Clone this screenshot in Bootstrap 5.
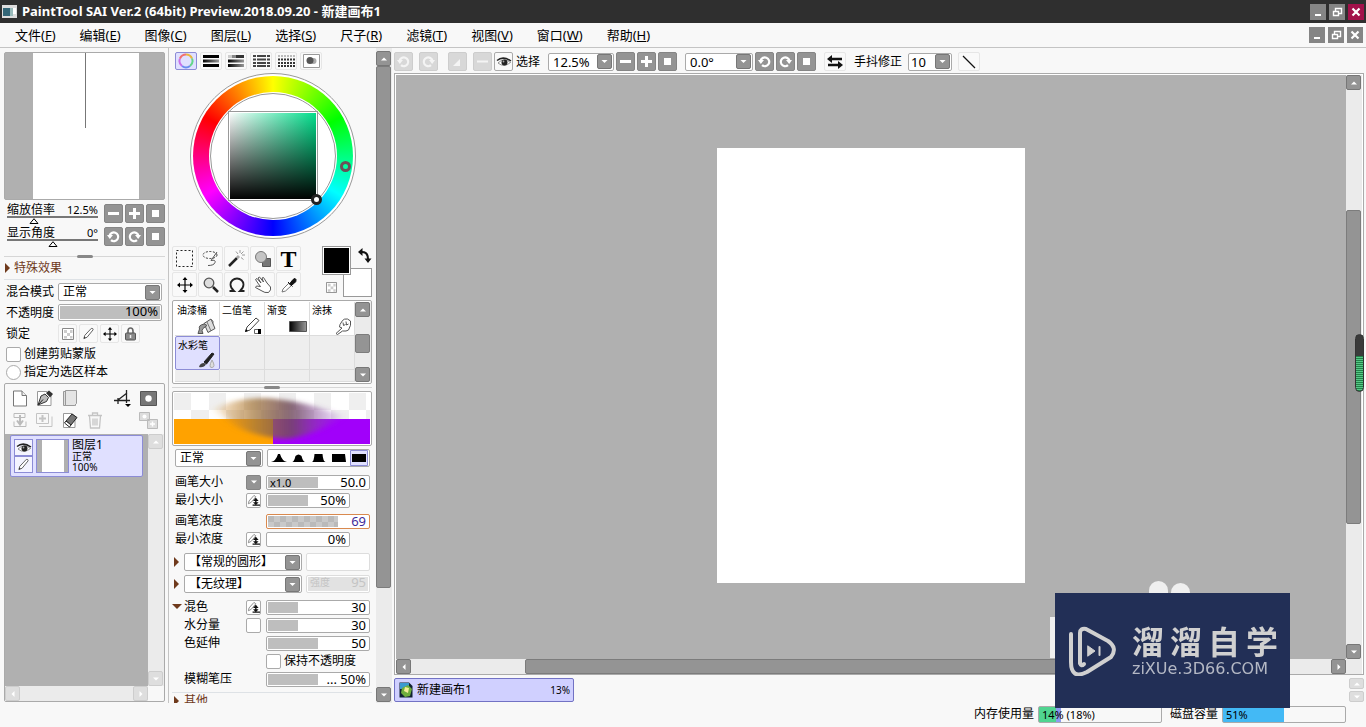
<!DOCTYPE html>
<html lang="zh-CN">
<head>
<meta charset="utf-8">
<meta name="viewport" content="width=device-width, initial-scale=1">
<title>PaintTool SAI Ver.2</title>
<link href="https://cdn.jsdelivr.net/npm/bootstrap@5.3.0/dist/css/bootstrap.min.css" rel="stylesheet">
<style>
:root{--face:#f8f8f8;--line:#c4c4c4;--edge:#aaa;--canvas:#b0b0b0;--btn:#949494;--brown:#6f3a1c}
body{font-family:"Noto Sans","Noto Sans CJK SC",sans-serif;font-size:12px;line-height:16px;color:#000;background:var(--face);overflow:hidden}
button,input,select{font:inherit;color:inherit}
button{padding:0;border:0;background:none}
svg{display:block}
.titlebar{height:23px;background:#2f2f2f;color:#fff;font-weight:700;font-size:13px;padding:0 2px;gap:5px;flex:none}
.caption{line-height:18px;padding-bottom:2px}
.menubar{height:25px;border-bottom:1px solid var(--line);padding:0 3px;flex:none;font-size:13px}
.menubar a{color:#000;text-decoration:none;padding:0 12px}
.wins{gap:3px}
.winbtn{width:16px;height:16px;background:#858585;display:grid;place-items:center}
.winbtn.shut{background:#a3114a}
.side{width:168px;padding:4px 3px 1px 4px}
.mid{width:225px;border-left:1px solid var(--line)}
.midbody{width:207px;padding:4px 0 0 3px;overflow:hidden}
.framed{border:1px solid var(--edge);border-radius:2px;background:#fff}
.navi{height:148px;background:var(--canvas);display:flex;justify-content:center;padding-left:2px}
.navi div{width:106px;background:#fff;display:flex;justify-content:center}
.navi i{width:1px;height:75px;background:#777}
.sq{width:19px;height:19px;background:var(--btn);border:1px solid #858585;border-radius:2px;display:grid;place-items:center;color:#fff;flex:none}
.sq.off{background:#d8d8d8;border-color:#cdcdcd;color:#f4f4f4}
.g2{gap:2px}.g3{gap:3px}
.tick{width:91px;height:19px;margin-left:3px}
.tick .top{height:12px;line-height:12px}
.tick span{font-size:11px}
.tick input{appearance:none;display:block;width:91px;height:8px;margin:0;background:linear-gradient(#777,#777) 0 0/100% 2px no-repeat}
.tick input::-webkit-slider-thumb{appearance:none;width:10px;height:6px;margin-top:2px;background:url("data:image/svg+xml,%3Csvg xmlns='http://www.w3.org/2000/svg' viewBox='0 0 10 6'%3E%3Cpath d='M5 .7L9 5.5H1z' fill='%23fff' stroke='%23000'/%3E%3C/svg%3E")}
.split{height:8px;display:flex;align-items:center;justify-content:center;background:linear-gradient(#d6d6d6,#d6d6d6) 0 50%/100% 1px no-repeat}
.split.midw{height:7px}
.split i{width:16px;height:3px;border-radius:2px;background:#888}
.head{color:var(--brown)}
.head.fx{gap:2px;padding-bottom:3px}
.field{padding-left:2px}
.combo{appearance:none;border:1px solid var(--edge);border-radius:2px;height:18px;line-height:16px;padding:0 18px 0 4px;background:#fff url("data:image/svg+xml,%3Csvg xmlns='http://www.w3.org/2000/svg' width='15' height='15'%3E%3Crect x='.5' y='.5' width='14' height='14' rx='1.5' fill='%23949494' stroke='%23777'/%3E%3Cpath d='M4.500 6h6l-3 3z' fill='%23fff'/%3E%3C/svg%3E") right 1px center no-repeat}
.big{font-size:13px}
.gauge{position:relative;height:15px;border:1px solid var(--edge);border-radius:2px;background:#fff;padding:1px}
.gauge input{appearance:none;display:block;width:100%;height:100%;margin:0;background:linear-gradient(#bebebe,#bebebe) 0 0/var(--v) 100% no-repeat}
.gauge input::-webkit-slider-thumb{appearance:none;width:1px;height:1px}
.gauge output,.gauge small{position:absolute;right:3px;top:0;line-height:13px;font-size:13px;pointer-events:none}
.gauge small{left:3px;right:auto;font-size:11px}
.gauge.hot{border-color:#d9894e}
.gauge.hot input{background:linear-gradient(90deg,transparent 70%,#fff 70%),repeating-conic-gradient(#c9c9c9 0 25%,#bababa 0 50%) 0 0/12px 12px}
.gauge.hot output{color:#3f2b9a}
.gauge.dim{border-color:#ddd;color:#c4c4c4}
.gauge.dim input{background:#e2e2e2}
.tool{border:1px solid #e6e6e6;border-radius:2px;display:grid;place-items:center;flex:none;background:#f9f9f9}
.lock .tool{width:19px;height:19px}
.lock span{margin-right:26px}
.tickbox{appearance:none;width:15px;height:15px;border:1px solid var(--edge);border-radius:2px;background:#fff;margin:0;flex:none}
.tickbox[type=radio]{border-radius:50%}
.clip{padding-left:2px}
.layers{flex:1;min-height:0;display:flex;flex-direction:column;background:var(--face);overflow:hidden;margin-top:3px}
.ltools{display:grid;grid-template-columns:repeat(3,25px) 1fr 29px 23px;height:50px;padding:3px 4px 3px 2px;flex:none}
.ltools button{display:grid;place-items:center}
.llist{background:var(--canvas);flex:1;padding:1px 5px}
.layer{width:133px;height:42px;border:1px solid #8c8cd6;border-radius:2px;background:#e0e0ff;display:flex;padding:3px}
.mini{width:19px;height:17px;border:1px solid #8c8cd6;background:#f4f4ff;display:grid;place-items:center}
.thumbn{width:33px;height:34px;background:var(--canvas);border:1px solid #8c8cd6;display:flex;justify-content:center;margin:0 3px}
.thumbn i{width:22px;background:#fff}
.lname{font-size:12px;line-height:12px}
.tiny{font-size:10px;line-height:11px}
.vbar{width:16px;display:flex;flex-direction:column;background:#ebebeb;flex:none}
.hbar{height:15px;display:flex;background:#ebebeb;flex:none}
.sb{width:15px;height:15px;background:var(--btn);border:1px solid #777;border-radius:2px;color:#fff;display:grid;place-items:center;flex:none}
.sb.off{background:#dedede;border-color:#cdcdcd}
.sb.half{height:11px}
.grab{background:#949494;border:1px solid #7c7c7c;border-radius:2px;min-width:14px}
.vbar .grab{width:15px}
.ptab{width:22px;height:18px;margin-right:3px}
.ptab.on{border-color:#8c8cd6;background:#e0e0ff}
.wheel{width:166px;height:166px;margin:3px 0 7px 18px;display:grid;place-items:center;position:relative;border-radius:50%;border:1px solid #999;background:#fff}
.hue{grid-area:1/1;width:160px;height:160px;border-radius:50%;background:conic-gradient(#ff0,#0f0 60deg,#0ff 120deg,#00f 180deg,#f0f 240deg,#f00 300deg,#ff0)}
.hole{grid-area:1/1;width:128px;height:128px;border-radius:50%;background:#fff;display:grid;place-items:center}
.hole div{width:126px;height:126px;border-radius:50%;border:1px solid #999}
.sv{grid-area:1/1;width:90px;height:90px;border:1px solid #999;outline:1px solid #fff;outline-offset:-2px;background:linear-gradient(to top,#000,transparent),linear-gradient(to right,#fff,#00e08c)}
.pin{position:absolute;width:11px;height:11px;border-radius:50%;border:3px solid #6b4f58}
.tools{display:grid;grid-template-columns:repeat(5,25px);grid-auto-rows:25px;gap:1px}
.glyph{font:700 24px/22px "Liberation Serif","Noto Sans CJK SC",serif}
.swatches{position:relative;width:50px;height:51px}
.swatches .fore,.swatches .back{position:absolute;width:29px;height:29px;border:1px solid #999;background:#000}
.swatches .fore{left:0;top:0;box-shadow:inset 0 0 0 1px #fff}
.swatches .back{right:0;bottom:0;background:#fff}
.midw{width:200px}
.brushes{height:84px;margin-top:3px;display:flex;padding:1px}
.bgrid{flex:1;display:grid;grid-template-columns:repeat(4,45px);grid-template-rows:34px 34px 1fr;padding-left:1px}
.bgrid>*{border-right:1px solid #dcdcdc;border-bottom:1px solid #dcdcdc;background:#eee;text-align:left;overflow:hidden}
.bgrid>button{background:#fff;font-size:10px;line-height:12px;padding:2px 0 0 2px;display:flex;flex-direction:column;justify-content:space-between}
.bgrid>button svg{align-self:flex-end;margin-right:2px}
.bgrid>button.on{border:1px solid #8c8cd6;background:#e0e0ff;border-radius:2px}
.preview{height:55px;padding:1px}
.row2{margin-left:3px}
.opts{display:grid;grid-template-columns:71px 20px 104px;height:15px;align-items:center;padding-left:3px}
.opts>.gauge{width:104px}
.opts>.gauge.short{width:84px}
.pen{width:15px;height:15px;border:1px solid #aaa;border-radius:2px;background:#fff;display:grid;place-items:center}
.pen.fill{background:var(--btn);border-color:#858585}
.opts.in>:first-child{padding-left:9px}
.half2{width:64px;height:18px;margin-left:4px;border-color:#ddd}
.half2 small{font-size:10px}
.wide{width:118px}
.mt2p{margin-top:2px}.mt3p{margin-top:3px}.mt4p{margin-top:4px}.mt6p{margin-top:6px}.mt7p{margin-top:7px}
.tw{width:12px;flex:none}
.fold{position:absolute;left:-3px;top:5px}
.work{padding:4px 2px 0 1px;min-width:0}
.bar1{height:19px;gap:2px}
.gap-end{margin-right:6px}
.stage{border:1px solid var(--edge);margin-top:2px;padding:1px 1px 0;min-height:0;background:#fff}
.desk{background:var(--canvas);display:flex;align-items:center;justify-content:center;min-width:0;padding-bottom:3px}
.paper{height:75%;aspect-ratio:310/438;background:#fff}
.tabs{height:28px;padding-top:3px}
.doc{width:180px;height:24px;border:1px solid #7272c4;background:#d0d0ff;border-radius:2px;padding:0 3px 0 4px}
.status{height:24px;padding:2px 20px 4px 0;flex:none}
.load{width:124px;height:17px;border:1px solid #aaa;border-radius:2px;margin:0 8px 0 4px;padding:0 3px;line-height:15px;font-size:11px}
.load.mem{background:linear-gradient(90deg,#50d490 14%,#8c9cf0 14% 18%,transparent 18%)}
.load.disk{background:linear-gradient(90deg,#43b9f5 50%,transparent 50%);margin-right:0}
.brand{position:fixed;right:76px;bottom:19px;width:235px;height:115px;background:#222f56;color:#d0d0d0;padding:0 12px}
.brand .name{font-size:32px;font-weight:700;line-height:36px;width:146px}
.brand .url{font-family:"DejaVu Sans",sans-serif;font-size:16px;line-height:18px;color:#b4b8c4}
.ear{position:absolute;width:19px;height:12px;top:-12px;left:94px;border-radius:10px 10px 0 0;background:#efefef}
.ear.two{left:116px;height:10px;top:-10px}
.slab{position:absolute;left:-5px;top:24px;width:5px;height:41px;background:#efefef}
.vol{position:fixed;right:2px;top:334px;width:9px;height:58px;border:1px solid #333;border-radius:5px;background:linear-gradient(#3a3a3a 21px,transparent 21px),repeating-linear-gradient(#56c887 0 1px,#238048 1px 2px)}
</style>
</head>
<body class="vh-100 d-flex flex-column">
<svg width="0" height="0" class="position-absolute" aria-hidden="true">
<symbol id="minus" viewBox="0 0 13 13"><path d="M1 6.500h11" stroke="currentColor" stroke-width="3"/></symbol>
<symbol id="plus" viewBox="0 0 13 13"><path d="M1 6.500h11M6.500 1v11" stroke="currentColor" stroke-width="3"/></symbol>
<symbol id="stop" viewBox="0 0 13 13"><path d="M3 3h7v7H3z" fill="currentColor"/></symbol>
<symbol id="ccw" viewBox="0 0 13 13"><path d="M4 10.200A4.400 4.400 0 1 0 2.500 6" fill="none" stroke="currentColor" stroke-width="2.200"/><path d="M0 5h6L2.800 9z" fill="currentColor"/></symbol>
<symbol id="cw" viewBox="0 0 13 13"><path d="M9 10.200A4.400 4.400 0 1 1 10.500 6" fill="none" stroke="currentColor" stroke-width="2.200"/><path d="M13 5H7l3.200 4z" fill="currentColor"/></symbol>
<symbol id="up" viewBox="0 0 8 8"><path d="M1 5.500h6L4 2.500z" fill="#fff"/></symbol>
<symbol id="down" viewBox="0 0 8 8"><path d="M1 2.500h6L4 5.500z" fill="#fff"/></symbol>
<symbol id="lt" viewBox="0 0 8 8"><path d="M5.500 1v6L2.500 4z" fill="#fff"/></symbol>
<symbol id="rt" viewBox="0 0 8 8"><path d="M2.500 1v6L5.500 4z" fill="#fff"/></symbol>
<symbol id="wmin" viewBox="0 0 16 16"><path d="M5 11h6" stroke="#fff" stroke-width="2"/></symbol>
<symbol id="wres" viewBox="0 0 16 16"><path d="M6.500 8V4.500h6v5H10M4.500 7.500h5v4h-5z" fill="none" stroke="#fff" stroke-width="1.400"/></symbol>
<symbol id="wx" viewBox="0 0 16 16"><path d="M4.500 4.500l7 7m0-7l-7 7" stroke="#fff" stroke-width="2.200"/></symbol>
<symbol id="eye" viewBox="0 0 16 12"><path d="M1 4.500Q7-.5 15 5" fill="none" stroke="#222" stroke-width="1.500"/><path d="M2 7Q8 1 14.500 6.500 8 12 2 7z" fill="#fff" stroke="#666" stroke-width=".7"/><circle cx="8.500" cy="6.500" r="3" fill="#222"/><circle cx="7.500" cy="5.500" r=".9" fill="#aaa"/></symbol>
<symbol id="pencil" viewBox="0 0 14 14"><path d="M2 12.500l1-3.500L10 1.500q2-.5 2 1.500L5.500 11z" fill="#fff" stroke="#555"/><path d="M2 12.500l.7-2 1.300 1z" fill="#222"/></symbol>
<symbol id="penup" viewBox="0 0 14 14"><path d="M1.500 10.500l.7-3L7.500 1.500l2 1.500-5 6z" fill="#fff" stroke="#888"/><path d="M9.500 5v5M6 12h8" fill="none" stroke="#111" stroke-width="1.500"/><path d="M9.500 4l3 3.500h-6zM9.500 12l3-3h-6z" fill="#111"/></symbol>
<symbol id="move" viewBox="0 0 16 16"><path d="M8 1.500v13M1.500 8h13" stroke="currentColor" stroke-width="1.200"/><path d="M8 0l2.500 3h-5zM8 16l2.500-3h-5zM0 8l3-2.500v5zM16 8l-3-2.500v5z" fill="currentColor"/></symbol>
<symbol id="chk" viewBox="0 0 12 12"><path d="M.5.5h11v11H.5z" fill="#fff" stroke="#888"/><path d="M2 2h3v3H2zM8 2h2.500v3H8zM5 5h3v3H5zM2 8h3v2.500H2zM8 8h2.500v2.500H8z" fill="#ccc"/></symbol>
<symbol id="tri" viewBox="0 0 8 10"><path d="M1 0l5 5-5 5z" fill="#6f3a1c"/></symbol>
<symbol id="sheet" viewBox="0 0 16 16"><path d="M1.500.5H10l4.500 4.500v10.500h-13z" fill="#fff" stroke="#777"/><path d="M10 .5V5h4.500" fill="#eee" stroke="#777"/></symbol>
</svg>

<header class="titlebar d-flex align-items-center">
 <svg width="15" height="13" viewBox="0 0 15 13"><path d="M0 0h15v13H0z" fill="#ddd"/><path d="M1 3h7v8H1z" fill="#367"/><path d="M8 3h3v8H8z" fill="#9bb"/><path d="M11 3h3v6h-3z" fill="#fff"/></svg>
 <span class="caption">PaintTool SAI Ver.2 (64bit) Preview.2018.09.20 - 新建画布1</span>
 <div class="ms-auto d-flex wins">
  <button class="winbtn" aria-label="最小化"><svg width="16" height="16"><use href="#wmin"/></svg></button>
  <button class="winbtn" aria-label="还原"><svg width="16" height="16"><use href="#wres"/></svg></button>
  <button class="winbtn shut" aria-label="关闭"><svg width="16" height="16"><use href="#wx"/></svg></button>
 </div>
</header>
<nav class="menubar d-flex align-items-center">
 <a href="#">文件(<u>F</u>)</a><a href="#">编辑(<u>E</u>)</a><a href="#">图像(<u>C</u>)</a><a href="#">图层(<u>L</u>)</a><a href="#">选择(<u>S</u>)</a><a href="#">尺子(<u>R</u>)</a><a href="#">滤镜(<u>T</u>)</a><a href="#">视图(<u>V</u>)</a><a href="#">窗口(<u>W</u>)</a><a href="#">帮助(<u>H</u>)</a>
 <div class="ms-auto d-flex wins">
  <button class="winbtn" aria-label="最小化画布"><svg width="16" height="16"><use href="#wmin"/></svg></button>
  <button class="winbtn" aria-label="还原画布"><svg width="16" height="16"><use href="#wres"/></svg></button>
  <button class="winbtn" aria-label="关闭画布"><svg width="16" height="16"><use href="#wx"/></svg></button>
 </div>
</nav>

<main class="d-flex flex-fill" style="min-height:0">
<!-- navigator and layers -->
<aside class="side d-flex flex-column flex-shrink-0">
 <div class="navi framed"><div><i></i></div></div>
 <div class="d-flex mt4p g2">
  <div class="tick me-auto"><div class="top d-flex justify-content-between"><label for="zoom">缩放倍率</label><span>12.5%</span></div><input id="zoom" type="range" value="27"></div>
  <button class="sq" aria-label="缩小"><svg width="13" height="13"><use href="#minus"/></svg></button><button class="sq" aria-label="放大"><svg width="13" height="13"><use href="#plus"/></svg></button><button class="sq" aria-label="重置"><svg width="13" height="13"><use href="#stop"/></svg></button>
 </div>
 <div class="d-flex mt4p g2">
  <div class="tick me-auto"><div class="top d-flex justify-content-between"><label for="ang">显示角度</label><span>0°</span></div><input id="ang" type="range" value="50"></div>
  <button class="sq" aria-label="左转"><svg width="13" height="13"><use href="#ccw"/></svg></button><button class="sq" aria-label="右转"><svg width="13" height="13"><use href="#cw"/></svg></button><button class="sq" aria-label="重置角度"><svg width="13" height="13"><use href="#stop"/></svg></button>
 </div>
 <div class="split mt6p"><i></i></div>
 <div class="head fx d-flex align-items-center border-bottom"><svg width="8" height="10" class="flex-shrink-0"><use href="#tri"/></svg>特殊效果</div>
 <div class="d-flex align-items-center justify-content-between mt3p field" style="padding-right:3px"><label for="mode">混合模式</label><select id="mode" class="combo" style="width:104px"><option>正常</option></select></div>
 <div class="d-flex align-items-center justify-content-between mt3p field" style="padding-right:3px"><label for="opa">不透明度</label><div class="gauge" style="width:104px;height:17px"><input id="opa" type="range" value="100" style="--v:100%"><output>100%</output></div></div>
 <div class="d-flex align-items-center mt3p lock field g2"><span>锁定</span>
  <button class="tool" aria-label="锁定透明"><svg width="12" height="12"><use href="#chk"/></svg></button>
  <button class="tool" aria-label="锁定绘制"><svg width="13" height="13"><use href="#pencil"/></svg></button>
  <button class="tool" aria-label="锁定移动"><svg width="14" height="14"><use href="#move"/></svg></button>
  <button class="tool" aria-label="全部锁定"><svg width="13" height="14" viewBox="0 0 13 14"><path d="M4 7V4q0-3 2.500-3T9 4v3" fill="none" stroke="#666" stroke-width="1.600"/><rect x="1.500" y="6" width="10" height="7" rx="1" fill="#888" stroke="#555"/><path d="M6.500 8v3" stroke="#eee" stroke-width="1.500"/></svg></button>
 </div>
 <label class="d-flex align-items-center mt3p clip g3"><input type="checkbox" class="tickbox">创建剪贴蒙版</label>
 <label class="d-flex align-items-center mt2p clip g3"><input type="radio" class="tickbox">指定为选区样本</label>
 <section class="layers framed">
  <div class="ltools">
   <button aria-label="新建图层"><svg width="16" height="17"><use href="#sheet"/></svg></button>
   <button aria-label="新建钢笔图层"><svg width="18" height="17" viewBox="0 0 18 17"><path d="M1.500 1.500H11l4 4v10H1.500z" fill="#fff" stroke="#999"/><path d="M2 15l3-9 4-2 3.500 3.500-2 4z" fill="#bbb" stroke="#333"/><path d="M2.500 14.500L7 9.500" stroke="#222"/><path d="M10 3l3-2.500L17 4l-3 3.500z" fill="#333"/></svg></button>
   <button aria-label="新建图层组"><svg width="16" height="16" viewBox="0 0 16 16"><path d="M1.500 1.500h12v14h-12z" fill="#ddd" stroke="#999"/><path d="M3.500.5h11v13l-2 2h-9z" fill="#e4e4e4" stroke="#999"/></svg></button><span></span>
   <button aria-label="透视尺"><svg width="20" height="18" viewBox="0 0 20 18"><path d="M1 11.500h16M5 15V9M5 11L14 4M13.500 1v13" fill="none" stroke="#222" stroke-width="1.300"/><path d="M12 15h6l-3 3z" fill="#000"/></svg></button>
   <button aria-label="蒙版"><svg width="17" height="15" viewBox="0 0 17 15"><path d="M.5.5h16v14H.5z" fill="#777" stroke="#555"/><circle cx="8.500" cy="7.500" r="3.200" fill="#fff"/></svg></button>
   <button aria-label="向下转写"><svg width="16" height="16" viewBox="0 0 16 16" fill="none" stroke="#bbb"><path d="M2 1.500h11v4H2zM2 9.500v5h12v-5"/><path d="M8 3v9M5 8.500l3 4 3-4" stroke-width="2"/></svg></button>
   <button aria-label="向下合并"><svg width="17" height="16" viewBox="0 0 17 16" fill="none" stroke="#c4c4c4"><path d="M.5 1.500h12v10H.5zM3 14.500h13v-10"/><path d="M6.500 3v7M3 6.500h7" stroke-width="2"/></svg></button>
   <button aria-label="清除图层"><svg width="18" height="17" viewBox="0 0 18 17"><path d="M2.500 1.500H11l3 3v11H2.500z" fill="#fff" stroke="#999"/><path d="M5 9l6-7 5 3.500-6 7.500z" fill="#777" stroke="#222"/><path d="M5 9l5 4-1.500 2L3.500 11z" fill="#fff" stroke="#222"/></svg></button>
   <button aria-label="删除图层"><svg width="16" height="17" viewBox="0 0 16 17" fill="none" stroke="#c4c4c4" stroke-width="1.300"><path d="M1 3.500h14M5.500 3V1h5v2M2.500 4l1 12h9l1-12M6 6.500v7M8 6.500v7M10 6.500v7"/></svg></button><span></span>
   <button aria-label="应用蒙版"><svg width="19" height="17" viewBox="0 0 19 17"><path d="M.5.5h10v8H.5zM8.500 7.500h10v9h-10z" fill="#ddd" stroke="#bbb"/><circle cx="5.500" cy="4.500" r="2" fill="#fff"/><path d="M13.500 9.500v5M11 12h5" stroke="#fff" stroke-width="1.500"/></svg></button>
  </div>
  <div class="d-flex flex-fill" style="min-height:0">
   <div class="llist"><div class="layer">
     <div class="d-flex flex-column justify-content-between"><button class="mini" aria-label="显示"><svg width="16" height="12"><use href="#eye"/></svg></button><button class="mini" aria-label="编辑"><svg width="13" height="13"><use href="#pencil"/></svg></button></div>
     <div class="thumbn"><i></i></div>
     <div class="tiny"><div class="lname">图层1</div><div>正常</div><div>100%</div></div>
   </div></div>
   <div class="vbar justify-content-between"><button class="sb off" aria-label="上"><svg width="8" height="8"><use href="#up"/></svg></button><button class="sb off" aria-label="下"><svg width="8" height="8"><use href="#down"/></svg></button></div>
  </div>
  <div class="hbar justify-content-between" style="margin-right:16px"><button class="sb off" aria-label="左"><svg width="8" height="8"><use href="#lt"/></svg></button><button class="sb off" aria-label="右"><svg width="8" height="8"><use href="#rt"/></svg></button></div>
 </section>
</aside>

<!-- colour, tools and brush settings -->
<aside class="mid d-flex flex-shrink-0">
<div class="midbody">
 <div class="d-flex row2">
  <button class="tool ptab on" aria-label="色轮"><svg width="16" height="16" viewBox="0 0 16 16" fill="none" stroke-width="2"><path d="M8 1.500a6.500 6.500 0 0 1 6 4" stroke="#e8b640"/><path d="M14 5.500a6.500 6.500 0 0 1-2 7.500" stroke="#63d68a"/><path d="M12 13a6.500 6.500 0 0 1-8 0" stroke="#6a8cf0"/><path d="M4 13a6.500 6.500 0 0 1-2-7.500" stroke="#c870e8"/><path d="M2 5.500a6.500 6.500 0 0 1 6-4" stroke="#f07070"/></svg></button>
  <button class="tool ptab" aria-label="RGB滑块"><svg width="16" height="12" viewBox="0 0 16 12"><defs><linearGradient id="g"><stop stop-color="#000"/><stop offset="1" stop-color="#999"/></linearGradient></defs><path d="M0 0h16v3H0zM0 9h16v3H0z" fill="#000"/><path d="M0 4.500h16v3H0z" fill="url(#g)"/></svg></button>
  <button class="tool ptab" aria-label="HSV滑块"><svg width="16" height="12" viewBox="0 0 16 12"><path d="M0 0h4v3H0z" fill="#ccc"/><path d="M4 0h4v3H4z" fill="#888"/><path d="M8 0h8v3H8z" fill="#333"/><path d="M0 4.500h16v3H0zM0 9h16v3H0z" fill="url(#g)"/></svg></button>
  <button class="tool ptab" aria-label="中间色条"><svg width="17" height="12" viewBox="0 0 17 12"><path d="M0 1h17M0 4.500h17M0 8h17M0 11h17" stroke="#444" stroke-width="2" stroke-dasharray="3 1 9 1"/></svg></button>
  <button class="tool ptab" aria-label="色板"><svg width="17" height="12" viewBox="0 0 17 12"><path d="M0 1h17" stroke="#bbb" stroke-width="2" stroke-dasharray="2 1"/><path d="M0 4.500h17M0 8h17M0 11h17" stroke="#333" stroke-width="2" stroke-dasharray="2 1"/></svg></button>
  <button class="tool ptab" aria-label="调色盘"><svg width="17" height="14" viewBox="0 0 17 14"><path d="M.5.500h16v13H.5z" fill="#fff" stroke="#999"/><circle cx="10.500" cy="7" r="3" fill="#aaa"/><circle cx="7" cy="6.500" r="3.500" fill="#555"/></svg></button>
 </div>
 <div class="wheel"><div class="hue"></div><div class="hole"><div></div></div><div class="sv"></div><span class="pin" style="left:149px;top:87px"></span><span class="pin" style="left:120px;top:120px;border-color:#222;background:#fff"></span></div>
 <div class="d-flex justify-content-between midw">
  <div class="tools">
   <button class="tool" aria-label="矩形选择"><svg width="17" height="17"><path d="M.5.500h16v16H.5z" fill="none" stroke="#222" stroke-dasharray="2 2"/></svg></button>
   <button class="tool" aria-label="套索"><svg width="18" height="18" viewBox="0 0 18 18" fill="none" stroke="#333"><ellipse cx="8" cy="5" rx="7" ry="3.500" stroke-dasharray="2 1.500"/><path d="M15 2L9 10.500q5-1 4 2t-7 3" stroke="#555"/></svg></button>
   <button class="tool" aria-label="魔棒"><svg width="18" height="18" viewBox="0 0 18 18"><path d="M1 16L9 8" stroke="#222" stroke-width="2.500"/><path d="M9 8l2-2" stroke="#aaa" stroke-width="3"/><path d="M12 0v3M17 5h-3M15.500 1.500L13 4M8 1.500L10 4M15.500 9.500L13 7.500" stroke="#999"/></svg></button>
   <button class="tool" aria-label="形状"><svg width="18" height="18" viewBox="0 0 18 18"><path d="M8.500 8.500h8v8h-8z" fill="#777" stroke="#555"/><circle cx="7" cy="7" r="5.500" fill="#c4c4c4" stroke="#777"/></svg></button>
   <button class="tool glyph" aria-label="文字">T</button>
   <button class="tool" aria-label="移动"><svg width="16" height="16"><use href="#move"/></svg></button>
   <button class="tool" aria-label="缩放"><svg width="18" height="18" viewBox="0 0 18 18"><circle cx="7" cy="7" r="4.800" fill="#ddd" stroke="#555" stroke-width="1.300"/><path d="M11 11l5 5" stroke="#222" stroke-width="2.500"/></svg></button>
   <button class="tool" aria-label="旋转"><svg width="18" height="18" viewBox="0 0 18 18"><path d="M1.500 15h4.500Q2.500 12 2.500 8.500a6.500 6 0 0 1 13 0q0 3.500-3.500 6.500h4.500" fill="none" stroke="#222" stroke-width="1.800"/></svg></button>
   <button class="tool" aria-label="抓手"><svg width="18" height="18" viewBox="0 0 18 18"><path d="M4.500 8L1.500 3.500 3 2.500 7 7 4 2l1.500-1L9.500 6 8 2l1.500-.5L13 7l3.500 4q1 3-2 5.500-4 .5-6.500-1.500L1.500 11.500l1-1.500 4 .5z" fill="#fff" stroke="#555"/></svg></button>
   <button class="tool" aria-label="吸管"><svg width="18" height="18" viewBox="0 0 18 18"><path d="M2 16l1-3 6-6 2.500 2.500-6 5.500z" fill="#fff" stroke="#777"/><path d="M8 6l4.500 4.500M9.500 8L13 3.500q2.500-2 3 0T14.500 7L11 9.500z" fill="#111" stroke="#111"/></svg></button>
  </div>
  <div class="swatches"><button class="back" aria-label="背景色"></button><button class="fore" aria-label="前景色"></button>
   <svg class="position-absolute end-0 top-0" width="15" height="18" viewBox="0 0 15 18"><path d="M5 6q6 0 6 7" fill="none" stroke="#111" stroke-width="2"/><path d="M1 6l4.500-4v8zM11 17l-3.500-4.500h7z" fill="#111"/></svg>
   <svg class="position-absolute bottom-0 start-0 mb-1 ms-1" width="11" height="11"><use href="#chk"/></svg></div>
 </div>
 <div class="brushes framed midw">
  <div class="bgrid">
   <button>油漆桶<svg width="20" height="17" viewBox="0 0 20 17"><path d="M7 5.500L14 1l4 9.500-7 4z" fill="#ddd" stroke="#555"/><path d="M10 4l4 9M14 1.500q3 1 2 4" fill="none" stroke="#777"/><path d="M1 15.500h5q-2-3 0-5l4-3-2.500-1.500Q1 7 2.500 11z" fill="#999" stroke="#555"/></svg></button>
   <button>二值笔<svg width="18" height="18" viewBox="0 0 18 18"><path d="M1.500 14.500L3 10l9-9 3 2.500-9 9.500z" fill="#fff" stroke="#444"/><path d="M1 15l1-3 2 2z"/><path d="M10.500 12.500h6v4h-6z" fill="#fff" stroke="#666"/><path d="M14 12h3v5h-3z"/></svg></button>
   <button>渐变<svg width="18" height="16" viewBox="0 0 18 16"><path d="M.5 2.500h17v10H.5z" fill="url(#g)" stroke="#555"/></svg></button>
   <button>涂抹<svg width="17" height="17" viewBox="0 0 17 17"><path d="M1 15.500l1.500 1 5-3.500q4 .5 6-1 3-5 2-9L12.500 1Q9 .5 7.500 2.500L5 6.500l-.5 2.500 2.500 1zM8 4.500l.5 3 2-1M11 3.500l.5 3.500 2-1" fill="#fff" stroke="#555"/></svg></button>
   <button class="on">水彩笔<svg width="19" height="18" viewBox="0 0 19 18"><path d="M6 11L14 2l2 1-7.500 10z" fill="#222" stroke="#222"/><path d="M1 16q1-4 5-4l2 1q-2 4-7 3z" fill="#444"/><path d="M14 9q4 7 0 7.500T14 9z" fill="#ddd" stroke="#aaa"/></svg></button>
   <i></i><i></i><i></i><i></i><i></i><i></i><i></i>
  </div>
  <div class="vbar"><button class="sb" aria-label="上"><svg width="8" height="8"><use href="#up"/></svg></button><span style="flex:17"></span><div class="grab" style="height:19px"></div><span style="flex:14"></span><button class="sb" aria-label="下"><svg width="8" height="8"><use href="#down"/></svg></button></div>
 </div>
 <div class="split midw"><i></i></div>
 <div class="preview framed midw"><svg width="196" height="51" viewBox="0 0 196 51">
  <defs><pattern id="cb" width="35" height="35" patternUnits="userSpaceOnUse"><path d="M0 0h17v17H0zM17 17h18v18H17z" fill="#efefef"/></pattern>
  <filter id="soft" x="-20%" y="-40%" width="140%" height="180%"><feGaussianBlur stdDeviation="5 2"/></filter>
  <linearGradient id="mix"><stop stop-color="#d98a20" stop-opacity=".2"/><stop offset=".3" stop-color="#a4793f" stop-opacity=".75"/><stop offset=".6" stop-color="#6e4a5c" stop-opacity=".85"/><stop offset="1" stop-color="#a04fd4" stop-opacity=".15"/></linearGradient></defs>
  <path d="M0 0h196v26H0z" fill="url(#cb)"/><path d="M0 26h99v25H0z" fill="#ffa200"/><path d="M99 26h97v25H99z" fill="#a100fa"/>
  <path d="M42 16Q62 4 95 5 135 9 168 23 142 42 112 46 75 43 58 30z" fill="url(#mix)" filter="url(#soft)"/></svg></div>
 <div class="d-flex justify-content-between mt3p row2" style="width:195px">
  <select class="combo" style="width:88px" aria-label="笔刷模式"><option>正常</option></select>
  <div class="framed" style="width:103px;height:18px"><svg width="101" height="16" viewBox="0 0 101 16"><path d="M3 12q5-1 7-8h2q2 7 7 8zM24 12q2 0 3.500-6 3-3 6 0 1.500 6 4 6zM44 12q2-1 2.500-8h8q.5 7 3 8zM64 12V4h13l1 8z"/><path d="M82.500.5h17v15h-17z" fill="#e0e0ff" stroke="#8c8cd6"/><path d="M84 4h14v8H84z"/></svg></div>
 </div>
 <div class="opts mt7p"><label for="s1">画笔大小</label><button class="pen fill" aria-label="倍率"><svg width="8" height="8"><use href="#down"/></svg></button><div class="gauge"><input id="s1" type="range" value="50" style="--v:50%"><small>x1.0</small><output>50.0</output></div></div>
 <div class="opts mt3p"><label for="s2">最小大小</label><button class="pen" aria-label="笔压"><svg width="13" height="13"><use href="#penup"/></svg></button><div class="gauge short"><input id="s2" type="range" value="50" style="--v:50%"><output>50%</output></div></div>
 <div class="opts mt6p"><label for="s3">画笔浓度</label><span></span><div class="gauge hot"><input id="s3" type="range" value="69"><output>69</output></div></div>
 <div class="opts mt3p"><label for="s4">最小浓度</label><button class="pen" aria-label="笔压"><svg width="13" height="13"><use href="#penup"/></svg></button><div class="gauge short"><input id="s4" type="range" value="0" style="--v:0%"><output>0%</output></div></div>
 <div class="d-flex align-items-center mt7p"><svg class="tw" height="10"><use href="#tri" width="8" x="1"/></svg><select class="combo wide" aria-label="笔刷形状"><option>【常规的圆形】</option></select><input class="framed half2" disabled aria-label="形状强度"></div>
 <div class="d-flex align-items-center mt4p"><svg class="tw" height="10"><use href="#tri" width="8" x="1"/></svg><select class="combo wide" aria-label="笔刷纹理"><option>【无纹理】</option></select><div class="gauge dim half2"><input type="range" disabled aria-label="纹理强度"><small>强度</small><output>95</output></div></div>
 <div class="opts in mt6p"><label for="s5" class="position-relative"><svg class="fold" width="10" height="6"><path d="M0 0h10L5 5z" fill="#6f3a1c"/></svg>混色</label><button class="pen" aria-label="笔压"><svg width="13" height="13"><use href="#penup"/></svg></button><div class="gauge"><input id="s5" type="range" value="30" style="--v:30%"><output>30</output></div></div>
 <div class="opts in mt3p"><label for="s6">水分量</label><input type="checkbox" class="tickbox" aria-label="水分量笔压"><div class="gauge"><input id="s6" type="range" value="30" style="--v:30%"><output>30</output></div></div>
 <div class="opts in mt3p"><label for="s7">色延伸</label><span></span><div class="gauge"><input id="s7" type="range" value="50" style="--v:50%"><output>50</output></div></div>
 <div class="opts in mt3p"><span></span><span></span><label class="d-flex align-items-center g3"><input type="checkbox" class="tickbox">保持不透明度</label></div>
 <div class="opts in mt3p"><label for="s8">模糊笔压</label><span></span><div class="gauge"><input id="s8" type="range" value="50" style="--v:50%"><output>... 50%</output></div></div>
 <div class="head border-top mt6p d-flex align-items-center midw"><svg class="tw" height="10"><use href="#tri" width="8" x="1"/></svg>其他</div>
</div>
<div class="vbar" style="padding:3px 0 1px"><button class="sb" aria-label="上"><svg width="8" height="8"><use href="#up"/></svg></button><div class="grab" style="flex:521"></div><span style="flex:99"></span><button class="sb" aria-label="下"><svg width="8" height="8"><use href="#down"/></svg></button></div>
</aside>

<!-- canvas -->
<section class="work d-flex flex-column flex-fill">
 <div class="bar1 d-flex align-items-center">
  <button class="sq off" disabled aria-label="撤销"><svg width="13" height="13"><use href="#ccw"/></svg></button>
  <button class="sq off ms-1 me-1" disabled aria-label="重做"><svg width="13" height="13"><use href="#cw"/></svg></button>
  <button class="sq off ms-1" disabled aria-label="取消选择"><svg width="13" height="13" viewBox="0 0 13 13"><path d="M2 11l7-7v7z" fill="currentColor"/></svg></button>
  <button class="sq off ms-1" disabled aria-label="反选"><svg width="13" height="13" viewBox="0 0 13 13"><path d="M1 6.500h11" stroke="currentColor" stroke-width="2"/></svg></button>
  <div class="d-flex align-items-center g3 gap-end"><button class="tool" id="selview" style="width:19px;height:19px;border-color:#aaa"><svg width="16" height="12"><use href="#eye"/></svg></button><label for="selview">选择</label></div>
  <select class="combo big" style="width:66px" aria-label="缩放"><option>12.5%</option></select>
  <button class="sq" aria-label="缩小"><svg width="13" height="13"><use href="#minus"/></svg></button><button class="sq" aria-label="放大"><svg width="13" height="13"><use href="#plus"/></svg></button><button class="sq gap-end" aria-label="重置"><svg width="13" height="13"><use href="#stop"/></svg></button>
  <select class="combo big" style="width:68px" aria-label="角度"><option>0.0°</option></select>
  <button class="sq" aria-label="左转"><svg width="13" height="13"><use href="#ccw"/></svg></button><button class="sq" aria-label="右转"><svg width="13" height="13"><use href="#cw"/></svg></button><button class="sq gap-end" aria-label="重置角度"><svg width="13" height="13"><use href="#stop"/></svg></button>
  <button class="tool gap-end" style="width:22px;height:19px" aria-label="水平翻转"><svg width="16" height="14" viewBox="0 0 16 14"><path d="M4 4h11M12 10H1" fill="none" stroke="#111" stroke-width="2.400"/><path d="M0 4l5-4v8zM16 10l-5-4v8z" fill="#111"/></svg></button>
  <label for="stab" class="me-1">手抖修正</label><select id="stab" class="combo big me-1" style="width:44px;padding-left:2px"><option>10</option></select>
  <button class="tool" style="width:22px;height:19px" aria-label="直线"><svg width="14" height="14"><path d="M1 1l12 12" stroke="#111" stroke-width="1.300"/></svg></button>
 </div>
 <div class="stage d-flex flex-fill">
  <div class="d-flex flex-column flex-fill" style="min-width:0">
   <div class="desk flex-fill" style="min-height:0"><div class="paper"></div></div>
   <div class="hbar"><button class="sb" aria-label="左"><svg width="8" height="8"><use href="#lt"/></svg></button><span style="flex:114"></span><div class="grab" style="flex:690"></div><span style="flex:114"></span><button class="sb" aria-label="右"><svg width="8" height="8"><use href="#rt"/></svg></button></div>
  </div>
  <div class="vbar" style="padding-bottom:15px"><button class="sb" aria-label="上"><svg width="8" height="8"><use href="#up"/></svg></button><span style="flex:120"></span><div class="grab" style="flex:313"></div><span style="flex:120"></span><button class="sb" aria-label="下"><svg width="8" height="8"><use href="#down"/></svg></button></div>
 </div>
 <div class="tabs d-flex justify-content-between">
  <button class="doc d-flex align-items-center"><svg width="14" height="16" viewBox="0 0 14 16"><path d="M.5.500H10l3.500 3.500v11.500H.5z" fill="#123"/><path d="M1 1h9v6H1z" fill="#3b9ad0"/><path d="M3 6l6-3 4 4-2 7-5 1-4-4z" fill="#6fae3c"/><path d="M6 5l4 1-1 5-4-2z" fill="#f4ee9a"/></svg><span class="ms-1 me-auto">新建画布1</span><span class="tiny">13%</span></button>
  <div class="d-flex flex-column g2"><button class="sb off half" aria-label="上"><svg width="8" height="8"><use href="#up"/></svg></button><button class="sb off half" aria-label="下"><svg width="8" height="8"><use href="#down"/></svg></button></div>
 </div>
</section>
</main>
<footer class="status d-flex align-items-center justify-content-end">
 <span>内存使用量</span><div class="load mem">14% (18%)</div>
 <span>磁盘容量</span><div class="load disk">51%</div>
</footer>
<div class="vol"></div>
<div class="brand d-flex align-items-center justify-content-between"><span class="ear"></span><span class="ear two"></span><span class="slab"></span>
 <svg width="50" height="50" viewBox="0 0 50 50" fill="none" stroke="#d0d0d0" stroke-width="4" stroke-linecap="round" stroke-linejoin="round"><path d="M13 37V7q0-5 6-4l22 12q10 7 3 16L20 46Q4 54 4 36V8"/><path d="M13 37q1 4 4 1"/><path d="M21 20l7 5-7 5z" fill="#d0d0d0" stroke-width="1"/><path d="M32.500 21v8" stroke-width="2"/></svg>
 <div><div class="name d-flex justify-content-between"><span>溜</span><span>溜</span><span>自</span><span>学</span></div><div class="url">ziXUe.3D66.COM</div></div>
</div>
<script src="https://cdn.jsdelivr.net/npm/bootstrap@5.3.0/dist/js/bootstrap.bundle.min.js"></script>
</body>
</html>
